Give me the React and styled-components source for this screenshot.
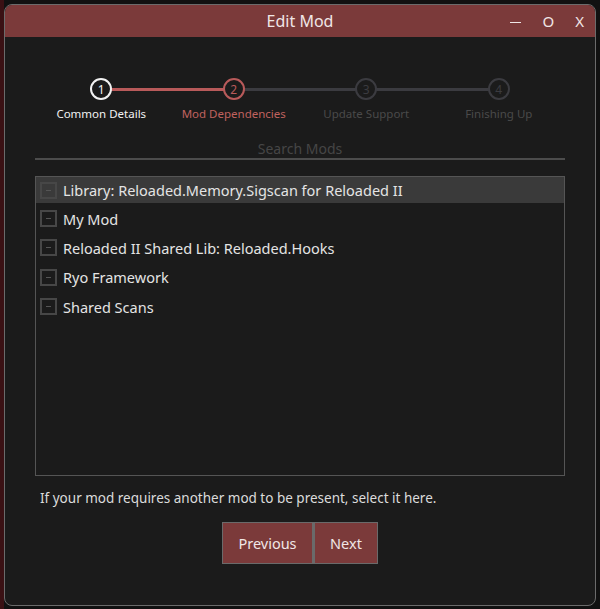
import styled, { createGlobalStyle } from "styled-components";

const Global = createGlobalStyle`
  html, body { margin: 0; padding: 0; background: #111; }
  body { font-family: "Noto Sans", "Open Sans", sans-serif; }
`;

const Page = styled.div`
  width: 600px;
  height: 609px;
  padding: 4px 4px 3px 4px;
  box-sizing: border-box;
  background: linear-gradient(to right, #3a1114 0, #3a1114 4px, #111 4px);
`;

const Window = styled.div`
  height: 100%;
  box-sizing: border-box;
  border: 1px solid #6b6b6b;
  border-radius: 8px;
  background: #1b1b1b;
  overflow: hidden;
  display: flex;
  flex-direction: column;
`;

const TitleBar = styled.div`
  height: 32px;
  background: #7b3a3a;
  display: flex;
  align-items: center;
  justify-content: center;
  position: relative;
  color: #f0e6e6;
  font-size: 16px;
`;

const Controls = styled.div`
  position: absolute;
  right: 11px;
  top: 0;
  height: 100%;
  display: flex;
  align-items: center;
  gap: 21px;
  font-size: 15px;
  color: #f0e6e6;
`;

const Minimize = styled.span`
  width: 11px;
  height: 1px;
  background: #f0e6e6;
  margin-top: 2px;
`;

const Content = styled.div`
  flex: 1;
  padding: 41px 30px 0 30px;
  display: flex;
  flex-direction: column;
`;

const Stepper = styled.div`
  display: grid;
  grid-template-columns: repeat(4, 1fr);
`;

const Step = styled.div`
  position: relative;
  display: flex;
  flex-direction: column;
  align-items: center;

  &::after {
    content: "";
    display: ${p => (p.$last ? "none" : "block")};
    position: absolute;
    top: 10px;
    left: 50%;
    width: 100%;
    height: 3px;
    background: ${p => p.$line};
  }
`;

const Circle = styled.div`
  position: relative;
  z-index: 1;
  width: 18px;
  height: 18px;
  border-radius: 50%;
  border: 2px solid ${p => p.$color};
  background: #1b1b1b;
  color: ${p => p.$color};
  font-size: 12px;
  display: flex;
  align-items: center;
  justify-content: center;
`;

const StepLabel = styled.div`
  margin-top: 6px;
  font-size: 11.5px;
  color: ${p => p.$color};
  white-space: nowrap;
`;

const Search = styled.div`
  margin-top: 18px;
  height: 19px;
  border-bottom: 2px solid #4c4c4c;
  text-align: center;
  font-size: 14px;
  line-height: 19px;
  color: #464646;
`;

const List = styled.div`
  margin-top: 16px;
  height: 300px;
  box-sizing: border-box;
  border: 1px solid #555;
  display: flex;
  flex-direction: column;
`;

const Row = styled.div`
  height: 29.3px;
  flex-shrink: 0;
  display: flex;
  align-items: center;
  gap: 6px;
  padding-left: 4px;
  background: ${p => (p.$active ? "#3a3a3a" : "transparent")};
  color: #e4e4e4;
  font-size: 14.5px;
  &:first-child { height: 26px; margin-bottom: 1px; }
`;

const Check = styled.div`
  width: 17px;
  height: 17px;
  border: 2px solid #474747;
  box-sizing: border-box;
  display: flex;
  align-items: center;
  justify-content: center;
  &::before {
    content: "";
    width: 5px;
    height: 1px;
    background: #555;
  }
`;

const Help = styled.div`
  margin-top: 13px;
  padding-left: 5px;
  font-size: 13.5px;
  color: #dcdcdc;
`;

const Buttons = styled.div`
  margin-top: 15px;
  display: flex;
  justify-content: center;
`;

const Button = styled.button`
  height: 42px;
  width: ${p => p.$w}px;
  background: #7b3a3a;
  border: 1px solid #6a6a6a;
  color: #f0e6e6;
  font-family: inherit;
  font-size: 14.5px;
  & + & { border-left-width: 2px; }
`;

const steps = [
  { n: 1, label: "Common Details", c: "#f2f2f2", lc: "#f2f2f2", line: "#b85a5a" },
  { n: 2, label: "Mod Dependencies", c: "#b85a5a", lc: "#c0625f", line: "#3b3b40" },
  { n: 3, label: "Update Support", c: "#3b3b40", lc: "#4a4a4a", line: "#3b3b40" },
  { n: 4, label: "Finishing Up", c: "#3b3b40", lc: "#4a4a4a" },
];

const mods = [
  "Library: Reloaded.Memory.Sigscan for Reloaded II",
  "My Mod",
  "Reloaded II Shared Lib: Reloaded.Hooks",
  "Ryo Framework",
  "Shared Scans",
];

export default function App() {
  return (
    <Page>
      <Global />
      <Window>
        <TitleBar>
          Edit Mod
          <Controls>
            <Minimize />
            <span>O</span>
            <span>X</span>
          </Controls>
        </TitleBar>
        <Content>
          <Stepper>
            {steps.map((s, i) => (
              <Step key={s.n} $line={s.line} $last={i === steps.length - 1}>
                <Circle $color={s.c}>{s.n}</Circle>
                <StepLabel $color={s.lc}>{s.label}</StepLabel>
              </Step>
            ))}
          </Stepper>
          <Search>Search Mods</Search>
          <List>
            {mods.map((m, i) => (
              <Row key={m} $active={i === 0}>
                <Check />
                {m}
              </Row>
            ))}
          </List>
          <Help>If your mod requires another mod to be present, select it here.</Help>
          <Buttons>
            <Button $w={91}>Previous</Button>
            <Button $w={65}>Next</Button>
          </Buttons>
        </Content>
      </Window>
    </Page>
  );
}
